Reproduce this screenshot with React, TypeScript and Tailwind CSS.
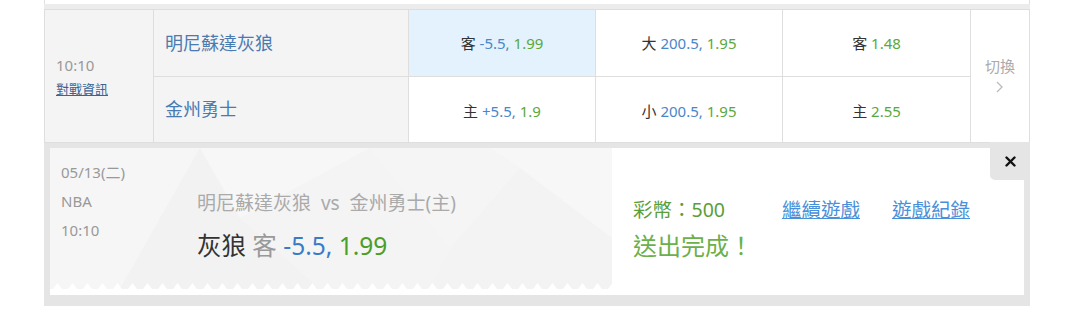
import React from "react";

const F = { fontFamily: '"Noto Sans", "Noto Sans CJK TC", sans-serif' };

function Odds({ label, a, b }: { label: string; a?: string; b: string }) {
  return (
    <span className="text-[15px] leading-[20px]">
      <span className="text-[#333]">{label}</span>
      {a ? <span className="text-[#4a86c8]"> {a},</span> : null}
      <span className="text-[#5aa83a]"> {b}</span>
    </span>
  );
}

function Pattern() {
  return (
    <svg className="absolute inset-0" width="562" height="141" viewBox="0 0 562 141">
      <polygon points="0,0 150,0 70,141 0,141" fill="#f6f6f6" />
      <polygon points="150,0 70,141 270,141" fill="#f2f2f2" />
      <polygon points="150,0 320,0 190,70" fill="#f7f7f7" />
      <polygon points="320,0 440,0 470,20 400,100" fill="#f5f5f5" />
      <polygon points="440,0 562,0 562,90 470,20" fill="#f7f7f7" />
      <polygon points="400,100 470,20 562,90 562,141 380,141" fill="#f3f3f3" />
      <polygon points="190,70 320,0 400,100 300,141 270,141" fill="#f4f4f4" />
    </svg>
  );
}

function Zigzag() {
  const pts: string[] = ["0,8"];
  for (let x = 0; x <= 562; x += 15) {
    pts.push(`${x},8`);
    pts.push(`${x + 3},8`);
    pts.push(`${x + 7.5},2`);
    pts.push(`${x + 12},8`);
  }
  pts.push("562,8");
  return (
    <svg className="absolute left-0 bottom-0" width="562" height="8" viewBox="0 0 562 8">
      <polygon points={pts.join(" ")} fill="#ffffff" />
    </svg>
  );
}

export default function App() {
  return (
    <div className="w-[1080px] h-[335px] bg-white" style={F}>
      <div className="ml-[44px] w-[986px]">
        {/* previous row remnant */}
        <div className="h-[4px] border-x border-[#e0e0e0]" />
        <div className="h-[5px] bg-[#ececec]" />
        {/* table */}
        <div className="grid bg-[#dedede] p-px gap-px grid-cols-[108px_254px_186px_186px_187px_58px] grid-rows-[66px_65px]">
          <div className="row-span-2 bg-[#f4f4f4] flex flex-col justify-center pl-[11px]">
            <div className="text-[15px] leading-[20px] text-[#999]">10:10</div>
            <div className="mt-[6px] text-[13px] leading-[17px] text-[#3a6494] underline">對戰資訊</div>
          </div>
          <div className="bg-[#f4f4f4] flex items-center pl-[11px] text-[18px] text-[#4a7bb0]">明尼蘇達灰狼</div>
          <div className="bg-[#e3f2fc] flex items-center justify-center"><Odds label="客" a="-5.5" b="1.99" /></div>
          <div className="bg-white flex items-center justify-center"><Odds label="大" a="200.5" b="1.95" /></div>
          <div className="bg-white flex items-center justify-center"><Odds label="客" b="1.48" /></div>
          <div className="row-span-2 bg-white flex flex-col items-center justify-center pb-[4px]">
            <div className="text-[15px] leading-[20px] text-[#aaa]">切換</div>
            <svg className="mt-[5px]" width="8" height="12" viewBox="0 0 8 12">
              <polyline points="1,1 6,6 1,11" fill="none" stroke="#bbb" strokeWidth="1.3" />
            </svg>
          </div>
          <div className="bg-[#f4f4f4] flex items-center pl-[11px] text-[18px] text-[#4a7bb0]">金州勇士</div>
          <div className="bg-white flex items-center justify-center pt-[2px]"><Odds label="主" a="+5.5" b="1.9" /></div>
          <div className="bg-white flex items-center justify-center pt-[2px]"><Odds label="小" a="200.5" b="1.95" /></div>
          <div className="bg-white flex items-center justify-center pt-[2px]"><Odds label="主" b="2.55" /></div>
        </div>
        {/* result panel */}
        <div className="bg-[#e5e5e5] pt-[5px] pl-[6px] pr-[6px] pb-[11px]">
          <div className="relative bg-white h-[147px] flex">
            <div className="relative w-[562px] h-[141px] bg-[#f4f4f4] overflow-hidden">
              <Pattern />
              <div className="relative flex">
                <div className="w-[147px] pl-[11px] pt-[10px] text-[15px] leading-[29px] text-[#999]">
                  <div>05/13(二)</div>
                  <div>NBA</div>
                  <div>10:10</div>
                </div>
                <div className="pt-[42px]">
                  <div className="text-[19px] leading-[26px] text-[#aaa] whitespace-nowrap">
                    明尼蘇達灰狼&nbsp;&nbsp;vs&nbsp;&nbsp;金州勇士(主)
                  </div>
                  <div className="mt-[13px] text-[24.5px] leading-[34px] whitespace-nowrap">
                    <span className="text-[#333]">灰狼</span>
                    <span className="text-[#999]"> 客</span>
                    <span className="text-[#3a7bc8]"> -5.5,</span>
                    <span className="text-[#4a9e2a]"> 1.99</span>
                  </div>
                </div>
              </div>
              <Zigzag />
            </div>
            <div className="pl-[21px] pt-[49px]">
              <div className="flex text-[19.5px] leading-[26px] whitespace-nowrap">
                <span className="w-[149px] text-[#5a9e3a]">彩幣：500</span>
                <span className="text-[#4a90d9] underline">繼續遊戲</span>
                <span className="ml-[32px] text-[#4a90d9] underline">遊戲紀錄</span>
              </div>
              <div className="mt-[6px] text-[24px] leading-[34px] text-[#6bb04a]">送出完成！</div>
            </div>
            <div className="absolute top-[-6px] right-[-6px] w-[40px] h-[38px] bg-[#e5e5e5] rounded-bl-[5px] flex items-center justify-center">
              <svg width="11" height="11" viewBox="0 0 11 11">
                <path d="M1.5 1.5 L9.5 9.5 M9.5 1.5 L1.5 9.5" stroke="#111" strokeWidth="2.4" strokeLinecap="round" />
              </svg>
            </div>
          </div>
        </div>
      </div>
    </div>
  );
}
